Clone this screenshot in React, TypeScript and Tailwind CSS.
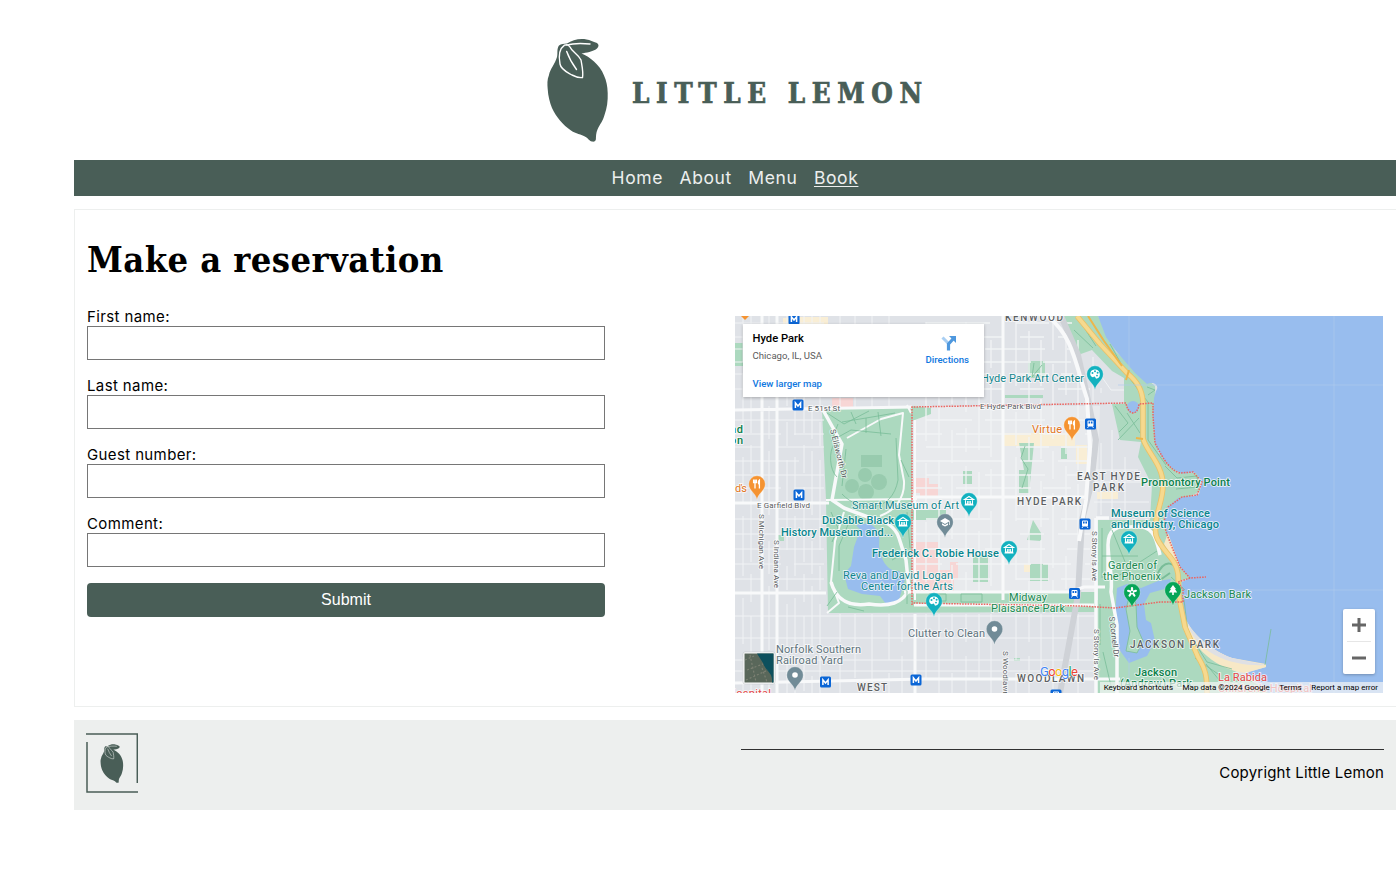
import React from "react";

const FIELDS = ["First name:", "Last name:", "Guest number:", "Comment:"];

function LemonMark({ className, leaf }: { className: string; leaf: string }) {
  return (
    <svg viewBox="0 0 62 104" className={className} aria-hidden="true">
      <path
        d="M12 7.5C9.5 11 11 15 10 19C8 26 3 31 2 37C0 42 .3 46 .7 51C1 58 3 65 5 70C9 79 16 87 24 92.5C29 96 34 96 38.7 99C41 100 42 103 45 103.5C47 104 49 103 48.9 101C49 98 49 95 50.5 91.5C53 86 56 83 57.5 77C60 70 61 63 60.7 55C60.5 48 59.5 43 57 37.5C55 32 51 27 47 23.5C43 20 39 17 34.5 15.5C39 14.5 46 14 50 10.5C52 8.500 52 6.500 50 5C46 3.500 43 2 39.500 1.500C33 0 25 2 20 5.500C17 6 14 5.500 12 7.500Z"
        fill="#495e57"
      />
      <path
        d="M17.500 7.200C12 11 11.500 18 13 26C14 32 21 34.500 25 37C29 39 32 40 35.500 39.500C36.500 34 35 28 34 22C31 16 25 14 23 9C21.500 6.500 19 6.500 17.500 7.200ZM19.700 13.500C22 20 25.500 26 29.500 31.500M20 7.200C25 5.500 34 5.200 43 6"
        fill="none"
        stroke={leaf}
        strokeWidth="1.4"
        strokeLinecap="round"
        strokeLinejoin="round"
      />
    </svg>
  );
}

const SHORE =
  "M1098 316L1106 337L1116 351L1135 373L1147 384C1154 381 1160 386 1156 391L1154 398L1153 416L1155 443L1159 452C1165 463 1171 468 1180 473C1186 475 1190 471 1196 473L1202 482L1199 494C1192 498 1187 495 1178 498L1168 507C1162 513 1164 524 1168 537L1180 567L1190 578L1182 582L1183 603L1185 618C1191 632 1209 650 1232 658C1247 664 1258 665 1266 664L1266 667L1245 673L1258 682L1268 693H1383V316Z";

const DRIVE =
  "M1077 316L1100 344L1113 358L1127 373C1138 382 1142 390 1143 402L1143 438C1145 450 1163 464 1163 485C1163 504 1153 516 1156 535C1160 550 1176 557 1178 574L1179 597L1185 627L1198 657C1206 670 1207 677 1207 693";

type Tone = "teal" | "green" | "slate" | "orange" | "road" | "area" | "red" | "tealBold" | "greenBold";

const TONES: Record<Tone, string> = {
  teal: "fill-[#12858d]",
  tealBold: "fill-[#08858d] font-medium",
  green: "fill-[#208951]",
  greenBold: "fill-[#0b804b] font-medium",
  slate: "fill-[#60747d]",
  orange: "fill-[#e37420]",
  road: "fill-[#575b5e]",
  area: "fill-[#5c5f62] font-medium",
  red: "fill-[#e64545]",
};

function Label({ x, y, w, size = 11, tone, rotate, children }: {
  x: number; y: number; w: number; size?: number; tone: Tone; rotate?: number; children: string;
}) {
  return (
    <text
      x={x}
      y={y}
      fontSize={size}
      textLength={w}
      lengthAdjust="spacing"
      transform={rotate ? `rotate(${rotate} ${x} ${y})` : undefined}
      className={TONES[tone]}
      stroke="#ffffff"
      strokeOpacity="0.7"
      strokeWidth="1.8"
      strokeLinejoin="round"
      paintOrder="stroke"
    >
      {children}
    </text>
  );
}

type PinKind = "museum" | "art" | "food" | "school" | "dot" | "flower" | "tree";

function Pin({ x, y, color, kind }: { x: number; y: number; color: string; kind: PinKind }) {
  return (
    <g transform={`translate(${x} ${y})`}>
      <path d="M0 16C-1 9-8.2 7-8.2 0A8.2 8.2 0 1 1 8.2 0C8.2 7 1 9 0 16Z" fill={color} stroke="#ffffff" strokeOpacity="0.45" strokeWidth="0.6" />
      {kind === "museum" && (
        <path d="M-4.5-1.5L0-4.5L4.5-1.5ZM-3.5-.8V3H3.5V-.8M-4.5 4H4.5M-1.3 0V2.5M1.3 0V2.5M-1.3 1H1.3" fill="none" stroke="white" strokeWidth="1.1" />
      )}
      {kind === "art" && (
        <g>
          <path d="M-4.8 0A4.8 4.8 0 1 1 2 4.6C0 5.400 1 2.600-1 2.600C-2 4.400-4.800 2-4.800 0Z" fill="white" />
          <g fill={color}><circle cx="-2.5" cy="-1" r="1" /><circle cx="0" cy="-2.8" r="1" /><circle cx="2.6" cy="-1.200" r="1" /><circle cx="2" cy="1.600" r="0.9" /></g>
        </g>
      )}
      {kind === "food" && (
        <path d="M-3.4-4.5V-1.5H-.6V-4.5M-2-4.5V4.5M2.4 4.5V-4C1-3 1 0 2.4.4" fill="none" stroke="white" strokeWidth="1.3" />
      )}
      {kind === "school" && (
        <path d="M-5-1L0-4L5-1L0 2ZM-3 1.3L0 3L3 1.3V3L0 4.6L-3 3ZM4.3-1V3H5V-1Z" fill="white" />
      )}
      {kind === "dot" && <circle r="2.8" fill="white" />}
      {kind === "flower" && (
        <g>
          <path d="M0 0V-4M0 0L3.900-1.200M0 0L2.400 3.500M0 0L-2.400 3.500M0 0L-3.900-1.200" stroke="white" strokeWidth="2.2" strokeLinecap="round" />
          <circle r="1" fill={color} />
        </g>
      )}
      {kind === "tree" && <path d="M0-5L3-1H2L4.2 2.6H.8V5H-.8V2.6H-4.2L-2-1H-3Z" fill="white" />}
    </g>
  );
}

function Metro({ x, y }: { x: number; y: number }) {
  return (
    <g transform={`translate(${x} ${y})`}>
      <rect x="-5.5" y="-5.5" width="11" height="11" rx="1.5" fill="#0b66d6" />
      <path d="M-2.600 3V-2.200L0 1L2.600-2.200V3" fill="none" stroke="white" strokeWidth="1.500" />
    </g>
  );
}

function Train({ x, y }: { x: number; y: number }) {
  return (
    <g transform={`translate(${x} ${y})`}>
      <rect x="-5.5" y="-5.5" width="11" height="11" rx="1.5" fill="#0b66d6" />
      <rect x="-3" y="-3.6" width="6" height="6" rx="1" fill="white" />
      <path d="M-2-2.4H-.4V-.4H-2ZM.4-2.4H2V-.4H.4Z" fill="#0b66d6" />
      <path d="M-2 2.4L-3 4M2 2.4L3 4" stroke="white" strokeWidth="0.9" />
    </g>
  );
}

const WEST_STREETS = [743, 751, 769, 787, 795, 804, 812, 820];
const EAST_STREETS = [926, 939, 952, 966, 979, 991, 1016, 1029, 1041, 1053, 1066, 1078];
const CROSS_STREETS = [323, 337, 349, 362, 374, 389, 420, 434, 447, 461, 475, 488, 519, 534, 549, 564, 579];
const SOUTH_STREETS = [616, 638, 660, 671];
const SOUTH_AVENUES = [840, 855, 872, 889, 902, 926, 939, 952, 966, 979, 991, 1016, 1029, 1041, 1053, 1078];
const DASHES = ["46 13 60 22", "28 14 75 12", "64 26 33 12", "90 16 24 14"];

function MapArt() {
  return (
    <svg viewBox="735 316 648 377" className="block h-[377px] w-[648px] font-['Roboto',sans-serif]" role="img">
      <rect x="735" y="316" width="648" height="377" fill="#dfe2e7" />
      <path d="M913 406H1100L1095 600H913Z" fill="#e8eaed" />

      <path
        d="M1004 433H1075V446H1004ZM1066 420H1079V433H1066ZM1076 445H1087V464H1076ZM1024 564H1040V572H1024ZM1097 492H1118V499H1097ZM783 318H792V324H783ZM800 317H828V324H800Z"
        fill="#f9eed5"
      />
      <path
        d="M832 398H853V407H832ZM913 478H929V493H913ZM913 542H938V574H913ZM917 570H954V592H917ZM950 562H958V580H950ZM920 484H938V498H920Z"
        fill="#f7d6d5"
      />

      <g fill="#acd9bf">
        <path d="M822 410L912 406L931 408V414L912 421V603L1000 600H1100V612L828 613L826 500Z" />
        <path d="M735 343H743V366H735ZM1028 361H1045V378H1028ZM1005 395H1043V398H1005ZM1019 443H1034L1029 493H1019V470H1024ZM1061 448H1067V459H1061ZM963 471H972V484H963ZM1027 540L1033 520L1041 533V541ZM973 555H988V582H973ZM1030 564H1048V581H1030ZM912 510H946V520H912ZM778 535H784V541H778ZM1014 658H1020V661H1014Z" />
        <path d="M1064 316L1078 355L1092 350L1112 371L1124 378V404H1112L1120 440L1141 442L1138 457L1152 485L1150 520H1098V605L1103 645L1115 693H1272L1240 674L1210 657L1188 622L1182 580L1195 578L1168 535L1164 512L1200 491L1198 473L1178 473L1158 452L1155 386L1116 352L1098 316Z" />
        <path d="M912 592H1095V610H912Z" />
        <path d="M1097 600H1118V693H1097Z" />
      </g>

      <path d={SHORE} fill="#98bdee" />
      <path d="M1168 533L1180 567L1187 576L1174 561L1164 544ZM1185 618C1191 632 1209 650 1232 658L1266 664V667L1245 673C1211 669 1186 639 1185 618Z" fill="#f7e8c6" />
      <path d="M1186 619C1191 632 1209 650 1232 658L1266 665C1236 667 1195 656 1186 619Z" fill="#dfe0e4" />

      <g fill="#98bdee">
        <path d="M862 525C874 523 881 533 879 545C880 560 888 572 899 571L905 579L899 600L886 604L880 596L862 594L848 589L844 574L851 566L854 547Z" />
        <path d="M856 525L870 523L877 530L865 535Z" />
        <path d="M1117 588L1127 584L1141 588L1158 581L1171 579L1168 588L1150 593L1144 604L1146 620L1151 623L1155 641L1147 656L1129 663L1118 648L1115 617Z" />
        <circle cx="1133" cy="407" r="6" />
      </g>
      <path d="M1131 590L1136 604L1137 627L1143 641L1137 653L1126 651L1130 631L1126 609Z" fill="#acd9bf" stroke="#79bd98" strokeWidth="0.8" />

      <g fill="#98cbae">
        <path d="M861 455H882V467H861Z" />
        <circle cx="865" cy="475" r="7" /><circle cx="879" cy="482" r="8" /><circle cx="852" cy="486" r="7" /><circle cx="866" cy="492" r="8" />
      </g>

      <g stroke="#f1f3f5" strokeWidth="1" fill="none">
        {WEST_STREETS.map((x, i) => <path key={x} d={`M${x} 316V693`} strokeDasharray={DASHES[i % 4]} />)}
        {CROSS_STREETS.map((y, i) => <path key={y} d={`M735 ${y}H824`} strokeDasharray={DASHES[(i + 1) % 4]} />)}
        {[840, 855, 872, 889].map((x) => <path key={x} d={`M${x} 316V408`} />)}
        {EAST_STREETS.map((x, i) => <path key={x} d={`M${x} ${322 + (i % 3) * 9}V592`} strokeWidth="1.3" strokeDasharray={DASHES[i % 4]} />)}
        {CROSS_STREETS.map((y, i) => <path key={y} d={`M${i % 2 ? 914 : 926} ${y}H${i < 5 ? 1072 : 1090}`} strokeWidth="1.3" strokeDasharray={DASHES[(i + 2) % 4]} />)}
        {SOUTH_AVENUES.map((x, i) => <path key={x} d={`M${x} 614V693`} strokeDasharray={DASHES[(i + 1) % 4]} />)}
        {SOUTH_STREETS.map((y) => <path key={y} d={`M735 ${y}H1094`} />)}
        <path d="M1101 443V515M1112 430V515M1125 457V518M1094 470H1138M1094 482H1145M1094 502H1149M1097 370L1111 390H1124M1101 393V388M1093 357V404" />
      </g>
      <g stroke="#f8f9fa" strokeWidth="3" fill="none">
        <path d="M762 316V693M777 316V693M735 410L912 407M735 503H829M1003 316V600M735 593H826M915 614V693M912 497H1086M735 683L925 679H1120" />
        <path d="M915 420V600M826 500L917 499" strokeWidth="2" />
      </g>

      <path d="M1061 316L1078 355L1088 400L1096 440L1091 485L1082 520L1078 595L1060 693" fill="none" stroke="#cfd2d7" strokeWidth="6" />
      <g stroke="#f8f9fa" strokeWidth="3.5" fill="none" strokeLinejoin="round">
        <path d="M1047 316C1073 335 1076 366 1087 399L1090 447L1086 500L1079 541" strokeWidth="4" />
        <path d="M1096 518V693M1096 518H1109M1108 578V545C1108 529 1118 525 1130 527C1154 524 1156 537 1160 555M1108 545C1109 568 1113 575 1111 592L1117 625V693" />
        <path d="M823 410L842 444L837 472L832 500L844 508L868 517C885 520 895 526 899 538L906 560L909 590C902 603 890 607 869 604C848 607 836 600 831 582" />
        <path d="M847 438L881 419L903 413L899 455L904 481C905 499 894 511 880 516M844 512L835 541L831 582L839 603L827 613M907 405L911 413" strokeWidth="2" />
        <path d="M904 592H1070L1084 587H1105M914 605H1094" strokeWidth="3" />
      </g>

      <g stroke="#79bd98" strokeWidth="0.8" fill="none">
        <path d="M827 413L844 424L869 411M842 422L878 416L895 413M831 441L851 430L891 434M851 412L856 424M866 418V433M878 412L881 436M837 477C829 470 829 450 834 445M842 494C860 513 892 513 898 480L896 438M846 449L842 486M831 512L838 528L832 542M850 520L839 546V571M892 560L907 552M837 592L827 606M848 607L864 611M907 585V604M1110 344L1128 376L1139 391L1148 402V440L1166 465M1074 330L1093 348M1081 323L1096 346M1115 406L1128 423L1119 432M1127 413L1140 433M1118 440L1139 418M1165 466L1177 478L1197 476L1198 487L1176 489M1102 528V578M1102 556H1138M1112 530L1130 574M1115 578L1157 551M1184 600L1188 632L1207 662L1232 669M1265 665L1271 629M1025 446L1021 458L1028 469L1022 488M1034 363L1032 377L1042 365M1103 652L1111 686M1206 664L1220 681M1195 658L1218 674M1185 590L1171 577M1100 604V645M929 594H946V601H929ZM961 594H982V602H961ZM901 460L909 477M838 424L833 437M907 512L910 548M1148 395L1155 390L1147 387" />
        <path d="M1157 575C1165 557 1176 563 1178 574M1160 580L1170 573" strokeWidth="2" />
      </g>

      <g fill="none" strokeLinejoin="round">
        <path d={DRIVE} stroke="#eac268" strokeWidth="5.500" />
        <path d={DRIVE} stroke="#f6d98e" strokeWidth="3.800" />
        <path d="M1088 316L1104 341L1122 366" stroke="#edb64b" strokeWidth="2" />
        <path d="M1129 370L1126 380M1143 439L1136 438" stroke="#edb64b" strokeWidth="2" />
      </g>

      <path d="M1129 316V370M1129 658V693M1334 316V693M1118 385H1383M1192 590H1383" stroke="#b0cbed" strokeWidth="1" fill="none" opacity="0.65" />

      <path
        d="M912 605V407L1126 403C1128 416 1138 416 1139 404L1153 403V416L1155 443C1165 463 1171 470 1180 473L1193 472L1202 482L1197 495L1182 497L1168 507C1162 517 1165 530 1168 537L1180 567L1190 578L1206 577M1190 578L1178 582L1183 590V602H1160L1115 608L1080 606L912 603"
        fill="none"
        stroke="#ea6662"
        strokeWidth="1.5"
        strokeDasharray="1.6 1.1"
      />

      <Label x={1005} y={320.500} w={58} tone="area" size={10}>KENWOOD</Label>
      <Label x={808} y={411} w={32} size={8} tone="road">E 51st St</Label>
      <Label x={980} y={408.5} w={61} size={8} tone="road">E Hyde Park Blvd</Label>
      <Label x={757} y={508} w={53} size={8} tone="road">E Garfield Blvd</Label>
      <Label x={830} y={430} w={50} size={8} tone="road" rotate={76}>S Ellsworth Dr</Label>
      <Label x={759} y={514} w={55} size={8} tone="road" rotate={90}>S Michigan Ave</Label>
      <Label x={774} y={540} w={48} size={8} tone="road" rotate={90}>S Indiana Ave</Label>
      <Label x={1092} y={531} w={50} size={8} tone="road" rotate={90}>S Stony Is Ave</Label>
      <Label x={1094} y={629} w={51} size={8} tone="road" rotate={90}>S Stony Is Ave</Label>
      <Label x={1109} y={617} w={41} size={8} tone="road" rotate={83}>S Cornell Dr</Label>
      <Label x={1003} y={651} w={45} size={8} tone="road" rotate={90}>S Woodlawn</Label>
      <Label x={730} y={433} w={13} tone="greenBold">nd</Label>
      <Label x={730} y={444} w={13} tone="greenBold">on</Label>
      <Label x={735} y={492} w={12} tone="orange">d's</Label>
      <Label x={981} y={382} w={103} tone="teal">Hyde Park Art Center</Label>
      <Label x={1032} y={433} w={30} tone="orange">Virtue</Label>
      <Label x={852} y={509} w={107} tone="teal">Smart Museum of Art</Label>
      <Label x={822} y={524} w={72} tone="tealBold">DuSable Black</Label>
      <Label x={781} y={535.5} w={112} tone="tealBold">History Museum and...</Label>
      <Label x={872} y={557} w={127} tone="tealBold">Frederick C. Robie House</Label>
      <Label x={843} y={579} w={110} tone="teal">Reva and David Logan</Label>
      <Label x={861} y={590} w={92} tone="teal">Center for the Arts</Label>
      <Label x={1009} y={601} w={38} tone="green">Midway</Label>
      <Label x={991} y={612} w={74} tone="green">Plaisance Park</Label>
      <Label x={908} y={637} w={77} tone="slate">Clutter to Clean</Label>
      <Label x={776} y={652.5} w={85} tone="slate">Norfolk Southern</Label>
      <Label x={776} y={664} w={67} tone="slate">Railroad Yard</Label>
      <Label x={1077} y={480} w={63} tone="area" size={10}>EAST HYDE</Label>
      <Label x={1093} y={490.5} w={31} tone="area" size={10}>PARK</Label>
      <Label x={1017} y={505} w={64} tone="area" size={10}>HYDE PARK</Label>
      <Label x={1017} y={682} w={67} tone="area" size={10}>WOODLAWN</Label>
      <Label x={857} y={691} w={30} tone="area" size={10}>WEST</Label>
      <Label x={1130} y={648} w={89} tone="area" size={10}>JACKSON PARK</Label>
      <Label x={1141} y={486} w={89} tone="greenBold">Promontory Point</Label>
      <Label x={1111} y={516.5} w={99} tone="tealBold">Museum of Science</Label>
      <Label x={1111} y={528} w={108} tone="tealBold">and Industry, Chicago</Label>
      <Label x={1108} y={569} w={49} tone="green">Garden of</Label>
      <Label x={1103} y={580} w={58} tone="green">the Phoenix</Label>
      <Label x={1184} y={598} w={67} tone="green">Jackson Bark</Label>
      <Label x={1135} y={676} w={42} tone="greenBold">Jackson</Label>
      <Label x={1120} y={687} w={72} tone="greenBold">(Andrew) Park</Label>
      <Label x={1218} y={681} w={49} tone="red">La Rabida</Label>
      <Label x={1218} y={692} w={94} tone="red">Children's Hospital</Label>
      <Label x={728} y={697} w={43} tone="red">Hospital</Label>

      <Pin x={1095} y={374} color="#12b1bf" kind="art" />
      <Pin x={1072} y={425} color="#f59331" kind="food" />
      <Pin x={757} y={484} color="#f59331" kind="food" />
      <Pin x={969} y={501} color="#12b1bf" kind="museum" />
      <Pin x={903} y={522} color="#12b1bf" kind="museum" />
      <Pin x={945} y={522} color="#718b97" kind="school" />
      <Pin x={1009} y={549} color="#12b1bf" kind="museum" />
      <Pin x={1129} y={539} color="#12b1bf" kind="museum" />
      <Pin x={934} y={601} color="#12b1bf" kind="art" />
      <Pin x={994.5} y={629} color="#718b97" kind="dot" />
      <Pin x={795} y={675} color="#718b97" kind="dot" />
      <Pin x={1132} y={592} color="#06a557" kind="flower" />
      <Pin x={1173} y={590} color="#06a557" kind="tree" />
      <path d="M741 316L745 320L749 316Z" fill="#f59331" />

      <Metro x={794} y={319} />
      <Metro x={798} y={405} />
      <Metro x={799} y={495} />
      <Metro x={825.5} y={682} />
      <Metro x={916} y={680} />
      <Train x={1090.5} y={424} />
      <Train x={1085} y={524} />
      <Train x={1074.5} y={593.5} />
      <Train x={1056} y={695} />

      <text x="1040" y="676" fontSize="13" textLength="38" stroke="#ffffff" strokeWidth="1" paintOrder="stroke">
        <tspan fill="#4285f4">G</tspan><tspan fill="#ea4335">o</tspan><tspan fill="#fbbc05">o</tspan><tspan fill="#4285f4">g</tspan><tspan fill="#34a853">l</tspan><tspan fill="#ea4335">e</tspan>
      </text>

      <rect x="743" y="652" width="32" height="32" rx="2" fill="#ffffff" stroke="#b6babd" strokeWidth="0.5" />
      <rect x="744.500" y="653.500" width="29" height="29" fill="#59675a" />
      <path d="M757 653.500H773.500V682.500H772C773 672 766 672 763 663Z" fill="#0d505d" />
      <path d="M745 660L754 656M747 670L763 664M746 680L768 670M750 655L756 682M762 668L767 682" stroke="#7c8073" strokeWidth="1.2" strokeDasharray="2 2" />
    </svg>
  );
}

function MapPanel() {
  return (
    <div className="relative h-[377px] w-[648px] overflow-hidden font-['Roboto',sans-serif]">
      <MapArt />
      <div className="absolute top-2 left-2 flex h-[73px] w-[241px] justify-between bg-white pt-[7px] pr-[15px] pl-[9.5px] shadow-[0_1px_3px_rgba(0,0,0,0.25)]">
        <div className="flex flex-col">
          <span className="text-[11.2px] leading-[15px] font-medium text-black">Hyde Park</span>
          <span className="mt-[3px] text-[9.6px] leading-[14px] text-[#5b5b5b]">Chicago, IL, USA</span>
          <span className="mt-[14px] text-[9.6px] leading-[14px] font-medium text-[#0f78e0]">View larger map</span>
        </div>
        <div className="flex flex-col items-center pt-[4px]">
          <svg viewBox="0 0 16 16" className="ml-[3px] h-4 w-4">
            <path d="M1.500 2.500L7 8" fill="none" stroke="#a9cff3" strokeWidth="3" />
            <path d="M7.5 15.500V9L12 4" fill="none" stroke="#4e98de" strokeWidth="3.2" />
            <path d="M8 1H15V8Z" fill="#4e98de" />
          </svg>
          <span className="mt-[2px] text-[9.6px] leading-[14px] font-medium text-[#0f78e0]">Directions</span>
        </div>
      </div>
      <div className="absolute top-[293px] right-2 flex h-[65px] w-8 flex-col items-center rounded-xs bg-white shadow-[0_1px_3px_rgba(0,0,0,0.25)]">
        <svg viewBox="0 0 32 32" className="h-8 w-8"><path d="M9 16H23M16 9V23" stroke="#666666" strokeWidth="3" /></svg>
        <div className="h-px w-6 bg-[#e6e6e6]" />
        <svg viewBox="0 0 32 32" className="h-8 w-8"><path d="M9 16H23" stroke="#666666" strokeWidth="3" /></svg>
      </div>
      <div className="absolute right-0 bottom-0 flex h-[11px] items-center gap-[9.500px] bg-[#f5f5f5]/70 pr-[5px] pl-[4px] text-[8px] leading-[11px] whitespace-nowrap text-black">
        <span>Keyboard shortcuts</span>
        <span>Map data ©2024 Google</span>
        <span>Terms</span>
        <span>Report a map error</span>
      </div>
    </div>
  );
}

export default function App() {
  return (
    <div className="h-[871px] overflow-hidden bg-white pl-[74px] font-['Inter',sans-serif] text-black">
      <header className="flex h-[160px] items-start justify-center pt-[37.5px]">
        <LemonMark className="h-[104px] w-[62px]" leaf="#ffffff" />
        <svg viewBox="0 0 292 32" className="mt-[38px] ml-[22px] h-8 w-[292px] overflow-visible">
          <text x="1" y="27" fontSize="27.500" textLength="290" fill="#495e57" stroke="#495e57" strokeWidth="0.7" className="font-['DejaVu_Serif_Condensed','DejaVu_Serif',serif] font-bold">LITTLE LEMON</text>
        </svg>
      </header>

      <nav className="flex h-9 items-center justify-center gap-[16.500px] bg-[#495e57] text-[17.5px] tracking-[0.600px] text-[#edefee]">
        <a>Home</a>
        <a>About</a>
        <a>Menu</a>
        <a className="underline underline-offset-2">Book</a>
      </nav>

      <main className="mt-[13px] h-[498px] border border-r-0 border-[#edefee] pr-[13px] pl-3">
        <h1 className="pt-[24px] font-['DejaVu_Serif_Condensed','DejaVu_Serif',serif] text-[36px] leading-[50px] font-bold tracking-[0.420px]">Make a reservation</h1>
        <div className="mt-[23px] flex items-start justify-between">
          <form className="flex w-[518px] flex-col">
            {FIELDS.map((field) => (
              <label key={field} className="mb-4 block text-[15px] leading-[19px] tracking-[0.380px]">
                <span className="block">{field}</span>
                <input className="block h-[34px] w-full border border-[#767676] bg-white px-2 outline-none" />
              </label>
            ))}
            <button type="button" className="h-[34px] rounded bg-[#495e57] font-['Liberation_Sans',sans-serif] text-base text-white">Submit</button>
          </form>
          <div className="pt-[9px]">
            <MapPanel />
          </div>
        </div>
      </main>

      <footer className="mt-[13px] flex h-[90px] justify-between bg-[#edefee] pr-3 pl-3">
        <div className="relative mt-[13px] flex h-[60px] w-[52px] items-center justify-center">
          <svg viewBox="0 0 52 60" className="absolute inset-0 h-[60px] w-[52px]">
            <path d="M0 1H51.3V50M1 9V59H52" fill="none" stroke="#495e57" strokeWidth="1.5" />
          </svg>
          <LemonMark className="h-[39px] w-[24px]" leaf="#edefee" />
        </div>
        <div className="mt-[29px] w-[643px] border-t border-black/80 pt-[13px] text-right text-[15px] leading-5 tracking-[0.200px]">Copyright Little Lemon</div>
      </footer>
    </div>
  );
}
